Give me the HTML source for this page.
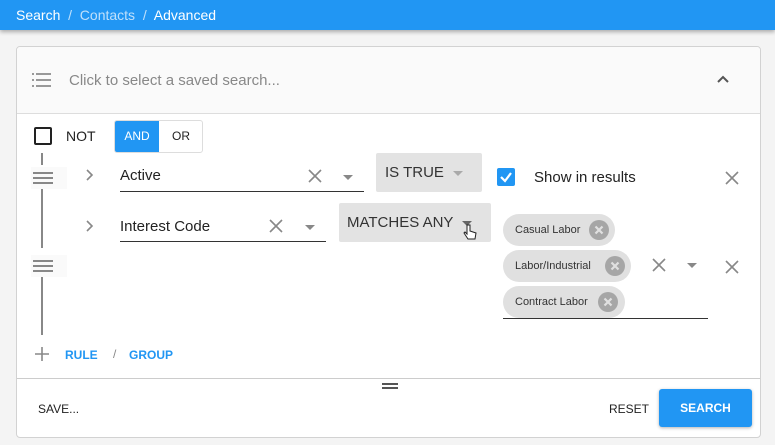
<!DOCTYPE html>
<html><head><style>
*{margin:0;padding:0;box-sizing:border-box}
body{width:775px;height:445px;background:#f4f4f4;font-family:"Liberation Sans",sans-serif;position:relative;overflow:hidden;color:#222}
.a{position:absolute}
.top{left:0;top:0;width:775px;height:30px;background:#2196f3;box-shadow:0 2px 4px rgba(0,0,0,.3);color:#fff;font-size:14px;line-height:31px;padding-left:16px}
.top .d{color:#bfe0fb}
.card{left:16px;top:46px;width:745px;height:392px;background:#fff;border:1px solid #d2d2d2;border-radius:4px;overflow:hidden}
.hdr{left:0;top:0;width:743px;height:67px;background:#fafafa;border-bottom:1px solid #ddd}
.line{background:#888}
.ham i{display:block;height:2px;background:#888;margin-bottom:3px;width:20px}
.ul{border-bottom:1px solid #333}
.car{width:0;height:0;border-left:5px solid transparent;border-right:5px solid transparent;border-top:5px solid #888}
.sel{background:#e3e3e3;border-radius:2px;font-size:15px;color:#333}
.chip{background:#e0e0e0;border-radius:16px;height:32px;font-size:11px;line-height:32px;padding-left:12px;color:#333}
.cx{position:absolute;top:6px;width:20px;height:20px;border-radius:50%;background:#a6a6a6}
</style></head><body>
<div class="a top">Search <span class="d">&nbsp;/&nbsp; Contacts &nbsp;/&nbsp;</span> Advanced</div>
<div class="a card">
 <div class="a hdr">
  <svg class="a" style="left:15px;top:25px" width="20" height="16"><g fill="#999"><rect x="0" y="1" width="2" height="2"/><rect x="0" y="7" width="2" height="2"/><rect x="0" y="13" width="2" height="2"/><rect x="4" y="1" width="15" height="2"/><rect x="4" y="7" width="15" height="2"/><rect x="4" y="13" width="15" height="2"/></g></svg>
  <div class="a" style="left:52px;top:25px;font-size:15px;color:#888">Click to select a saved search...</div>
  <svg class="a" style="left:699px;top:27px" width="14" height="10"><path d="M2 8 L7 3 L12 8" stroke="#555" stroke-width="2" fill="none"/></svg>
 </div>
 <div class="a" style="left:17px;top:80px;width:18px;height:18px;border:2px solid #222;border-radius:2px"></div>
 <div class="a" style="left:49px;top:81px;font-size:14px">NOT</div>
 <div class="a" style="left:97px;top:73px;width:89px;height:33px;border:1px solid #ddd;border-radius:3px;overflow:hidden;font-size:12px;line-height:31px">
  <div class="a" style="left:0;top:0;width:44px;height:31px;background:#2196f3;color:#fff;text-align:center">AND</div>
  <div class="a" style="left:44px;top:0;width:44px;height:31px;text-align:center">OR</div>
 </div>
 <div class="a line" style="left:24px;top:106px;width:2px;height:12px"></div>
 <div class="a line" style="left:24px;top:138px;width:2px;height:63px"></div>
 <div class="a line" style="left:24px;top:224px;width:2px;height:64px"></div>
 <div class="a ham" style="left:14px;top:120px;width:36px;height:22px;background:#fafafa;padding:5px 0 0 2px"><i></i><i></i><i></i></div>
 <div class="a ham" style="left:14px;top:208px;width:36px;height:22px;background:#fafafa;padding:5px 0 0 2px"><i></i><i></i><i></i></div>
 <svg class="a" style="left:68px;top:121px" width="10" height="14"><path d="M2 2 L7 7 L2 12" stroke="#888" stroke-width="1.6" fill="none"/></svg>
 <svg class="a" style="left:68px;top:172px" width="10" height="14"><path d="M2 2 L7 7 L2 12" stroke="#888" stroke-width="1.6" fill="none"/></svg>
 <div class="a ul" style="left:103px;top:120px;width:244px;height:25px;font-size:15px">Active</div>
 <svg class="a" style="left:290px;top:121px" width="16" height="16"><path d="M2 2L14 14M14 2L2 14" stroke="#888" stroke-width="1.6"/></svg>
 <div class="a car" style="left:326px;top:128px"></div>
 <div class="a sel" style="left:359px;top:106px;width:106px;height:39px;padding:11px 0 0 9px">IS TRUE</div>
 <div class="a car" style="left:436px;top:124px;border-top-color:#aaa"></div>
 <div class="a" style="left:480px;top:121px;width:18px;height:18px;background:#2196f3;border-radius:2px"><svg width="18" height="18"><path d="M4 9 L8 13 L14 5" stroke="#fff" stroke-width="2.2" fill="none"/></svg></div>
 <div class="a" style="left:517px;top:122px;font-size:15px">Show in results</div>
 <svg class="a" style="left:707px;top:123px" width="16" height="16"><path d="M2 2L14 14M14 2L2 14" stroke="#888" stroke-width="1.6"/></svg>
 <div class="a ul" style="left:103px;top:171px;width:206px;height:24px;font-size:15px">Interest Code</div>
 <svg class="a" style="left:251px;top:171px" width="16" height="16"><path d="M2 2L14 14M14 2L2 14" stroke="#888" stroke-width="1.6"/></svg>
 <div class="a car" style="left:288px;top:178px"></div>
 <div class="a sel" style="left:322px;top:156px;width:152px;height:39px;padding:11px 0 0 8px">MATCHES ANY</div>
 <div class="a car" style="left:445px;top:174px;border-top-color:#666"></div>
 <svg class="a" style="left:445px;top:176px" width="16" height="20"><path d="M5 2 v9 l-2 -2 l-1 1 l4 6 h7 l1 -6 l-3 -1 l-3 -1 v-6 z" fill="#fff" stroke="#222" stroke-width="1"/></svg>
 <div class="a chip" style="left:486px;top:167px;width:112px">Casual Labor<span class="cx" style="left:86px"><svg width="20" height="20"><path d="M6.5 6.5L13.5 13.5M13.5 6.5L6.5 13.5" stroke="#e0e0e0" stroke-width="2.2"/></svg></span></div>
 <div class="a chip" style="left:486px;top:203px;width:128px">Labor/Industrial<span class="cx" style="left:102px"><svg width="20" height="20"><path d="M6.5 6.5L13.5 13.5M13.5 6.5L6.5 13.5" stroke="#e0e0e0" stroke-width="2.2"/></svg></span></div>
 <div class="a chip" style="left:486px;top:239px;width:122px">Contract Labor<span class="cx" style="left:95px"><svg width="20" height="20"><path d="M6.5 6.5L13.5 13.5M13.5 6.5L6.5 13.5" stroke="#e0e0e0" stroke-width="2.2"/></svg></span></div>
 <div class="a" style="left:486px;top:271px;width:205px;height:1px;background:#333"></div>
 <svg class="a" style="left:634px;top:210px" width="16" height="16"><path d="M2 2L14 14M14 2L2 14" stroke="#888" stroke-width="1.6"/></svg>
 <div class="a car" style="left:670px;top:216px"></div>
 <svg class="a" style="left:707px;top:212px" width="16" height="16"><path d="M2 2L14 14M14 2L2 14" stroke="#888" stroke-width="1.6"/></svg>
 <svg class="a" style="left:17px;top:299px" width="16" height="16"><path d="M8 1V15M1 8H15" stroke="#888" stroke-width="1.6"/></svg>
 <div class="a" style="left:48px;top:301px;font-size:12px;color:#2196f3;font-weight:bold">RULE</div>
 <div class="a" style="left:96px;top:300px;font-size:12px;color:#888">/</div>
 <div class="a" style="left:112px;top:301px;font-size:12px;color:#2196f3;font-weight:bold">GROUP</div>
 <div class="a" style="left:0;top:331px;width:745px;height:1px;background:#ccc"></div>
 <div class="a" style="left:365px;top:336px;width:16px;height:2px;background:#555"></div>
 <div class="a" style="left:365px;top:340px;width:16px;height:2px;background:#555"></div>
 <div class="a" style="left:21px;top:355px;font-size:12px">SAVE...</div>
 <div class="a" style="left:592px;top:355px;font-size:12px">RESET</div>
 <div class="a" style="left:642px;top:342px;width:93px;height:38px;background:#2196f3;border-radius:3px;color:#fff;font-size:12px;font-weight:bold;text-align:center;line-height:38px;box-shadow:0 1px 3px rgba(0,0,0,.3)">SEARCH</div>
</div>
</body></html>
